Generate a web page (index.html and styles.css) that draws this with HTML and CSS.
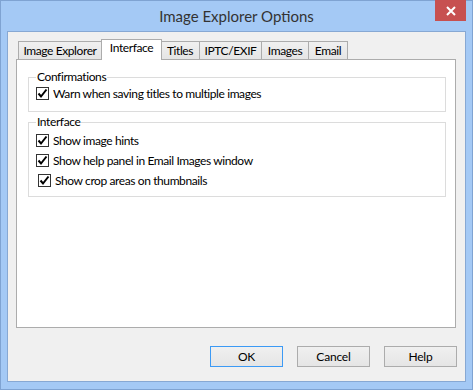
FILE: index.html
```html
<!DOCTYPE html>
<html lang="en">

<head>
    <meta charset="UTF-8">
    <title>Image Explorer Options</title>
    <link rel="stylesheet" href="styles.css">
</head>

<body>
    <div class="window">
        <div class="titlebar">
            <span class="title">Image Explorer Options</span>
            <button class="close-btn">
                <svg width="10" height="10" viewBox="0 0 10 10">
                    <path d="M1 1L9 9M9 1L1 9" stroke="#fff" stroke-width="2" />
                </svg>
            </button>
        </div>

        <div class="client">
            <div class="tabs">
                <div class="tab w-explorer">Image Explorer</div>
                <div class="tab active w-interface">Interface</div>
                <div class="tab w-titles">Titles</div>
                <div class="tab w-iptc">IPTC/EXIF</div>
                <div class="tab w-images">Images</div>
                <div class="tab w-email">Email</div>
            </div>

            <div class="panel">
                <fieldset class="group group-confirm">
                    <legend>Confirmations</legend>
                    <label class="check-row">
                        <span class="checkbox"><svg width="11" height="11" viewBox="0 0 11 11"><path d="M1.5 5.5L4 8.5L9.5 1.5" fill="none" stroke="#000" stroke-width="2" /></svg></span>
                        Warn when saving titles to multiple images
                    </label>
                </fieldset>

                <fieldset class="group group-interface">
                    <legend>Interface</legend>
                    <label class="check-row">
                        <span class="checkbox"><svg width="11" height="11" viewBox="0 0 11 11"><path d="M1.5 5.5L4 8.5L9.5 1.5" fill="none" stroke="#000" stroke-width="2" /></svg></span>
                        Show image hints
                    </label>
                    <label class="check-row">
                        <span class="checkbox"><svg width="11" height="11" viewBox="0 0 11 11"><path d="M1.5 5.5L4 8.5L9.5 1.5" fill="none" stroke="#000" stroke-width="2" /></svg></span>
                        Show help panel in Email Images window
                    </label>
                    <label class="check-row shifted">
                        <span class="checkbox"><svg width="11" height="11" viewBox="0 0 11 11"><path d="M1.5 5.5L4 8.5L9.5 1.5" fill="none" stroke="#000" stroke-width="2" /></svg></span>
                        Show crop areas on thumbnails
                    </label>
                </fieldset>
            </div>

            <div class="footer">
                <button class="btn default">OK</button>
                <button class="btn">Cancel</button>
                <button class="btn">Help</button>
            </div>
        </div>
    </div>
</body>

</html>
```

FILE: styles.css
```css
/* Global */
body {
    margin: 0;
    padding: 0;
    font-family: 'Lato', 'Noto Sans', sans-serif;
    font-size: 12px;
    letter-spacing: -0.4px;
    color: #000;
    background: #fff;
}

/* Window frame */
.window {
    width: 473px;
    height: 390px;
    box-sizing: border-box;
    background-color: #a4c9f5;
    border: 1px solid #7fa3d2;
    display: flex;
    flex-direction: column;
}

.titlebar {
    height: 30px;
    position: relative;
    display: flex;
    justify-content: center;
    align-items: center;
}

.title {
    font-size: 15px;
    letter-spacing: 0;
    color: #333;
    margin-top: -1px;
}

.close-btn {
    position: absolute;
    top: -1px;
    right: 6px;
    width: 31px;
    height: 21px;
    background-color: #c75050;
    border: none;
    padding: 0;
    display: flex;
    justify-content: center;
    align-items: center;
}

/* Client area */
.client {
    flex: 1;
    margin: 0 6px 7px 6px;
    border: 1px solid #87a8d3;
    background-color: #f0f0f0;
    padding: 7px 9px 0 8px;
    display: flex;
    flex-direction: column;
}

/* Tabs */
.tabs {
    display: flex;
    align-items: flex-end;
    height: 20px;
    padding-left: 2px;
    position: relative;
    z-index: 1;
}

.tab {
    box-sizing: border-box;
    height: 18px;
    border: 1px solid #acacac;
    border-bottom: none;
    background: linear-gradient(#f0f0f0, #e5e5e5);
    margin-left: -1px;
    text-align: center;
    line-height: 18px;
    white-space: nowrap;
}

.tab:first-child {
    margin-left: 0;
}

.tab.active {
    height: 21px;
    margin-bottom: -1px;
    background: #fff;
    line-height: 16px;
    position: relative;
}

.w-explorer { width: 84px; }
.w-interface { width: 61px; margin-right: -1px; }
.w-titles { width: 40px; }
.w-iptc { width: 63px; }
.w-images { width: 48px; }
.w-email { width: 40px; }

/* Panel */
.panel {
    height: 269px;
    box-sizing: border-box;
    border: 1px solid #acacac;
    background-color: #fff;
    padding: 10px 9px 0 11px;
}

.group {
    margin: 0;
    border: 1px solid #dcdcdc;
    padding: 0 0 0 7px;
    box-sizing: border-box;
}

.group legend {
    padding: 0 1px;
    margin-left: 0;
    height: 14px;
    line-height: 14px;
}

.group-confirm {
    height: 42px;
}

.group-interface {
    margin-top: 3px;
    height: 82px;
    padding-top: 1px;
}

.check-row {
    display: flex;
    align-items: center;
    height: 20px;
    gap: 4px;
    white-space: nowrap;
}

.group-confirm .check-row {
    margin-top: -1px;
}

.check-row.shifted {
    padding-left: 2px;
}

.checkbox {
    width: 13px;
    height: 13px;
    box-sizing: border-box;
    border: 1px solid #333;
    background: #fff;
    display: flex;
    justify-content: center;
    align-items: center;
}

/* Footer buttons */
.footer {
    display: flex;
    justify-content: flex-end;
    gap: 14px;
    padding-top: 18px;
    margin-right: -1px;
}

.btn {
    width: 73px;
    height: 21px;
    box-sizing: border-box;
    border: 1px solid #acacac;
    background: linear-gradient(#f0f0f0, #e5e5e5);
    font-family: inherit;
    font-size: 12px;
    letter-spacing: -0.2px;
    color: #000;
    padding: 0;
}

.btn.default {
    border-color: #3c9af5;
}
```
